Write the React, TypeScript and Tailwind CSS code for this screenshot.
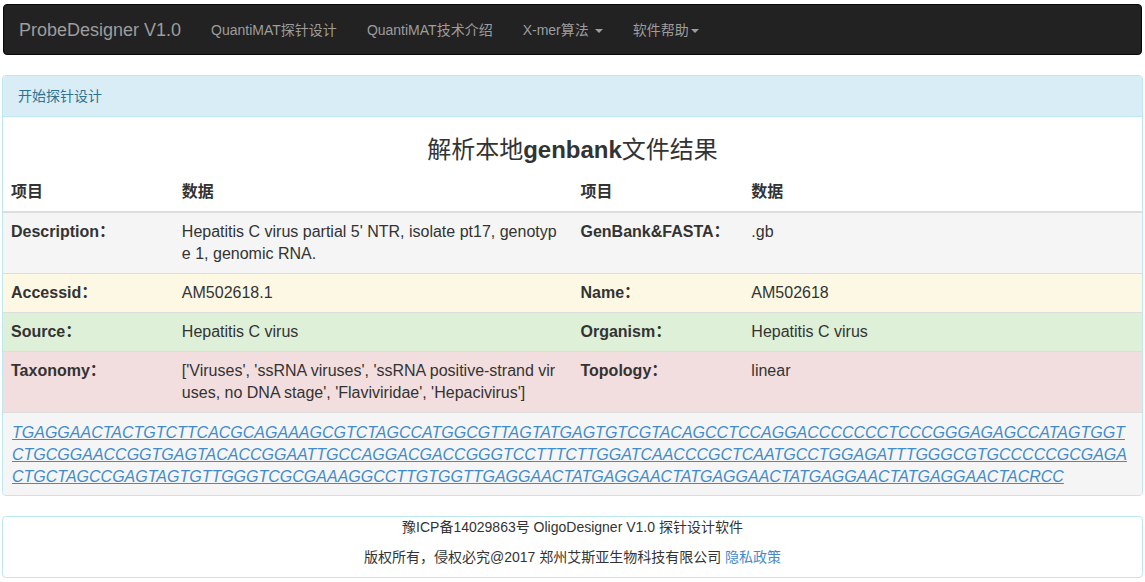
import React from "react";

const font = { fontFamily: '"Liberation Sans", Arial, "Noto Sans CJK SC", sans-serif' };

const SEQ =
  "TGAGGAACTACTGTCTTCACGCAGAAAGCGTCTAGCCATGGCGTTAGTATGAGTGTCGTACAGCCTCCAGGACCCCCCCTCCCGGGAGAGCCATAGTGGT" +
  "CTGCGGAACCGGTGAGTACACCGGAATTGCCAGGACGACCGGGTCCTTTCTTGGATCAACCCGCTCAATGCCTGGAGATTTGGGCGTGCCCCCGCGAGA" +
  "CTGCTAGCCGAGTAGTGTTGGGTCGCGAAAGGCCTTGTGGTTGAGGAACTATGAGGAACTATGAGGAACTATGAGGAACTATGAGGAACTACRCC";

function Caret() {
  return (
    <span className="inline-block ml-[2px] align-middle w-0 h-0 border-t-[4px] border-t-[#9d9d9d] border-x-[4px] border-x-transparent" />
  );
}

type Row = { bg: string; k1: string; v1: string; k2: string; v2: string };

const rows: Row[] = [
  {
    bg: "bg-[#f5f5f5]",
    k1: "Description：",
    v1: "Hepatitis C virus partial 5' NTR, isolate pt17, genotype 1, genomic RNA.",
    k2: "GenBank&FASTA：",
    v2: ".gb",
  },
  { bg: "bg-[#fcf8e3]", k1: "Accessid：", v1: "AM502618.1", k2: "Name：", v2: "AM502618" },
  { bg: "bg-[#dff0d8]", k1: "Source：", v1: "Hepatitis C virus", k2: "Organism：", v2: "Hepatitis C virus" },
  {
    bg: "bg-[#f2dede]",
    k1: "Taxonomy：",
    v1: "['Viruses', 'ssRNA viruses', 'ssRNA positive-strand viruses, no DNA stage', 'Flaviviridae', 'Hepacivirus']",
    k2: "Topology：",
    v2: "linear",
  },
];

export default function App() {
  return (
    <div className="w-[1145px] h-[582px] bg-white text-[#333] overflow-hidden px-[2px] pt-[4px]" style={font}>
      {/* Navbar */}
      <div className="mx-[1px] h-[51px] bg-[#222] border border-[#080808] rounded-[4px] flex items-center mb-[20px]">
        <div className="px-[15px] text-[18px] leading-[20px] text-[#9d9d9d]">ProbeDesigner V1.0</div>
        <div className="flex text-[14px] leading-[20px] text-[#9d9d9d]">
          <div className="px-[15px]">QuantiMAT探针设计</div>
          <div className="px-[15px]">QuantiMAT技术介绍</div>
          <div className="px-[15px]">
            X-mer算法 <Caret />
          </div>
          <div className="px-[15px]">
            软件帮助
            <Caret />
          </div>
        </div>
      </div>

      {/* Main panel */}
      <div className="border border-[#bce8f1] rounded-[4px] mb-[20px] overflow-hidden">
        <div className="bg-[#d9edf7] border-b border-[#bce8f1] px-[15px] py-[10px] text-[14px] leading-[20px] text-[#31708f]">
          开始探针设计
        </div>
        <div>
          <h3 className="mt-[20px] mb-[10px] text-center text-[24px] leading-[26px] font-normal">
            解析本地<b className="font-bold">genbank</b>文件结果
          </h3>
          <table className="w-full border-collapse text-[16px] leading-[22px] table-fixed">
            <colgroup>
              <col className="w-[15%]" />
              <col className="w-[35%]" />
              <col className="w-[15%]" />
              <col className="w-[35%]" />
            </colgroup>
            <thead>
              <tr className="border-b-2 border-[#ddd]">
                <th className="p-[8px] text-left font-bold">项目</th>
                <th className="p-[8px] text-left font-bold">数据</th>
                <th className="p-[8px] text-left font-bold">项目</th>
                <th className="p-[8px] text-left font-bold">数据</th>
              </tr>
            </thead>
            <tbody>
              {rows.map((r, i) => (
                <tr key={i} className={`${r.bg} ${i > 0 ? "border-t border-[#ddd]" : ""} align-top`}>
                  <td className="p-[8px] font-bold">{r.k1}</td>
                  <td className="p-[8px] pr-[12px] break-all">{r.v1}</td>
                  <td className="p-[8px] font-bold">{r.k2}</td>
                  <td className="p-[8px] break-all">{r.v2}</td>
                </tr>
              ))}
              <tr className="bg-[#f5f5f5] border-t border-[#ddd]">
                <td colSpan={4} className="pt-[9px] pb-[7px] pl-[9px] pr-[8px] break-all italic underline text-[#428bca]">
                  {SEQ}
                </td>
              </tr>
            </tbody>
          </table>
        </div>
      </div>

      {/* Footer */}
      <div className="border border-[#bce8f1] rounded-[4px] text-center text-[14px] leading-[20px] pb-[10px]">
        <p className="mb-[10px]">豫ICP备14029863号 OligoDesigner V1.0 探针设计软件</p>
        <p>
          版权所有，侵权必究@2017 郑州艾斯亚生物科技有限公司 <span className="text-[#428bca]">隐私政策</span>
        </p>
      </div>
    </div>
  );
}
